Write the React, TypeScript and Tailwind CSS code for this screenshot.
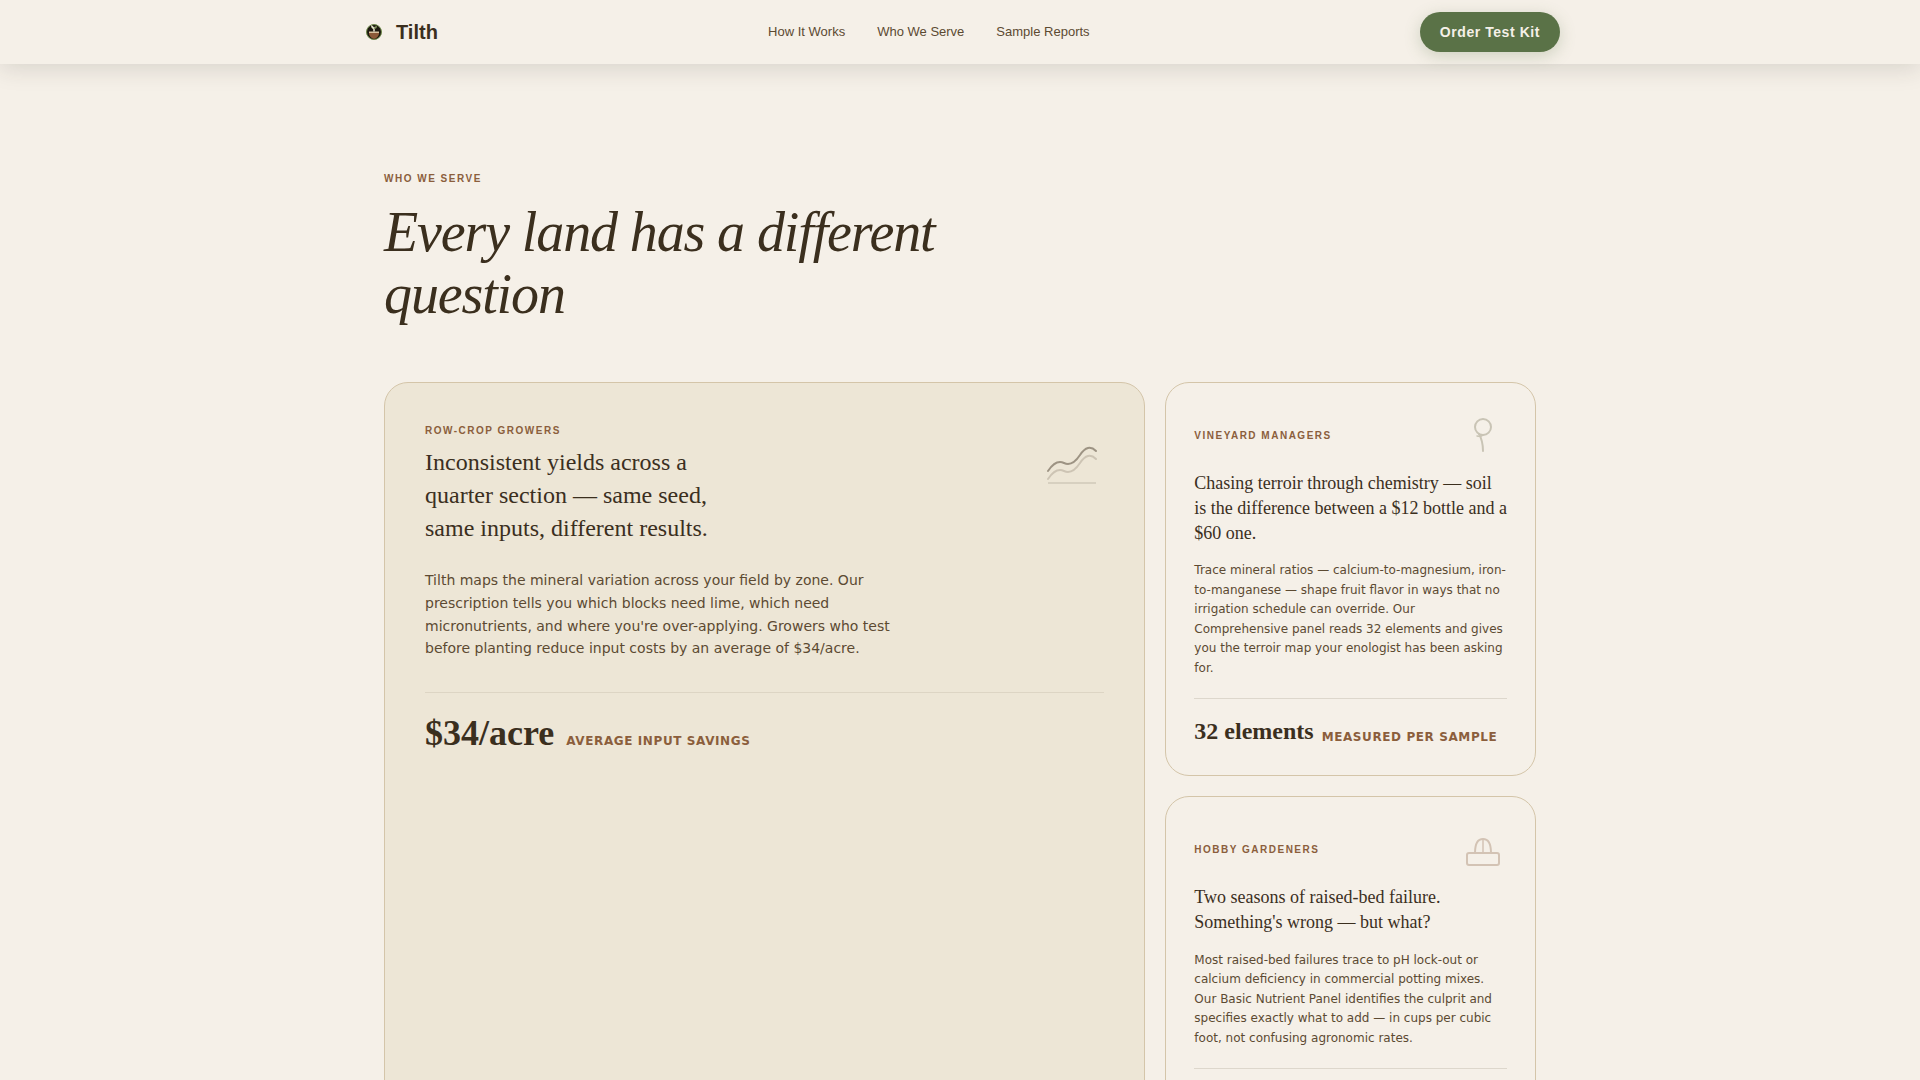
import React from "react";

const label =
  "font-['Liberation_Sans',sans-serif] text-[10px] leading-[15px] font-bold uppercase tracking-[1.5px] text-[#8b5e3c]";

function Logo() {
  return (
    <svg viewBox="0 0 28 28" className="size-7" aria-hidden="true">
      <circle cx="14" cy="14" r="7.5" fill="#1d1a10" stroke="#6f8a4c" strokeWidth="1" />
      <path d="M9 14h10v2q-1 4-5 5q-4-1-5-5z" fill="#8b5a38" />
      <path d="M9 13.500h10v1.500H9z" fill="#d9c3a0" />
      <path d="M14 13.500V9" stroke="#e9e4cf" strokeWidth="1.500" />
      <path d="M14 11q-3 0-3-4q3 1 3 4z" fill="#e4e6cc" />
      <path d="M14 11q3 0 3-3q-3 0-3 3z" fill="#7f8f5c" />
    </svg>
  );
}

function YieldIcon() {
  return (
    <svg viewBox="0 0 64 64" className="size-16 shrink-0" fill="none" stroke="#3b2f1e" strokeLinecap="round" aria-hidden="true">
      <path d="M8 48Q16 36 24 40T40 32T56 28" strokeWidth="2" opacity="0.45" />
      <path d="M8 56Q16 44 24 48T40 40T56 36" strokeWidth="2" opacity="0.18" />
      <path d="M8 60H56" strokeWidth="2" strokeLinecap="butt" opacity="0.12" />
    </svg>
  );
}

function VineIcon() {
  return (
    <svg viewBox="0 0 48 48" className="size-12 shrink-0" fill="none" stroke="#c9c4b5" strokeWidth="2" strokeLinecap="round" aria-hidden="true">
      <circle cx="24" cy="16" r="8" />
      <path d="M24 40Q24 30 20 23" />
      <path d="M18 25Q22 26 24 24" strokeWidth="1.5" />
    </svg>
  );
}

function BedIcon() {
  return (
    <svg viewBox="0 0 48 48" className="size-12 shrink-0" fill="none" stroke="#d3c3b4" strokeWidth="2" strokeLinecap="round" aria-hidden="true">
      <rect x="8" y="28" width="32" height="12" rx="2" />
      <path d="M16 28Q16 14 24 14Q32 14 32 28" />
      <path d="M24 28V14" strokeWidth="1.5" />
    </svg>
  );
}

type SmallCardProps = {
  name: string;
  icon: React.ReactNode;
  title: string;
  body: string;
  stat?: string;
  unit?: string;
};

function SmallCard({ name, icon, title, body, stat, unit }: SmallCardProps) {
  return (
    <article className="rounded-3xl border border-[#d4c5a9] p-7">
      <div className="mb-3 flex items-center justify-between">
        <p className={label}>{name}</p>
        {icon}
      </div>
      <h3 className="mb-4 font-['Liberation_Serif',serif] text-lg leading-snug text-[#3b2f1e]">{title}</h3>
      <p className="text-xs leading-relaxed text-[#5c4a32]">{body}</p>
      <div className="mt-5 flex items-end gap-2 border-t border-[#ddd7cc] pt-4">
        {stat && <span className="font-['Liberation_Serif',serif] text-2xl font-bold text-[#3b2f1e]">{stat}</span>}
        {unit && <span className="text-xs leading-5 font-bold uppercase tracking-[0.6px] text-[#8b5e3c]">{unit}</span>}
      </div>
    </article>
  );
}

export default function App() {
  return (
    <div className="h-screen overflow-hidden bg-[#f5f0e8] font-['DejaVu_Sans',sans-serif] text-[#3b2f1e]">
      <header className="relative z-10 bg-[#f5f0e8] font-['Liberation_Sans',sans-serif] shadow-[0_4px_24px_rgba(50,42,34,0.15)]">
        <div className="mx-auto flex h-16 max-w-[1200px] items-center justify-between">
          <a href="#" className="flex items-center gap-2 text-xl font-bold">
            <Logo />
            Tilth
          </a>
          <nav className="flex gap-8 text-[13px] text-[#5c4a32]">
            <a href="#how">How It Works</a>
            <a href="#serve">Who We Serve</a>
            <a href="#reports">Sample Reports</a>
          </nav>
          <button
            type="button"
            className="h-10 rounded-full bg-[#5a7247] px-5 text-sm font-bold tracking-[0.04em] text-[#f5f0e8] shadow-[0_4px_16px_rgba(90,114,71,0.25)]"
          >
            Order Test Kit
          </button>
        </div>
      </header>

      <main id="serve" className="mx-auto max-w-[1152px] pt-[107px]">
        <p className={label}>Who We Serve</p>
        <h1 className="mt-[15px] mb-[57px] max-w-[640px] font-['Liberation_Serif',serif] text-[56px] leading-[62px] italic tracking-[-0.02em]">
          Every land has a different question
        </h1>

        <div className="grid grid-cols-12 gap-5">
          <article className="col-span-8 rounded-3xl border border-[#d4c5a9] bg-[#ede6d6] p-10">
            <div className="mb-6 flex items-start justify-between">
              <div>
                <p className={label}>Row-Crop Growers</p>
                <h2 className="mt-2 max-w-xs font-['Liberation_Serif',serif] text-2xl leading-snug">
                  Inconsistent yields across a quarter section — same seed, same inputs, different results.
                </h2>
              </div>
              <YieldIcon />
            </div>
            <p className="max-w-[480px] text-sm leading-relaxed text-[#5c4a32]">
              Tilth maps the mineral variation across your field by zone. Our prescription tells you which blocks need
              lime, which need micronutrients, and where you're over-applying. Growers who test before planting reduce
              input costs by an average of $34/acre.
            </p>
            <div className="mt-8 flex items-baseline gap-3 border-t border-[#ddd5c4] pt-5">
              <span className="font-['Liberation_Serif',serif] text-4xl font-bold">$34/acre</span>
              <span className="text-xs font-bold uppercase tracking-[0.6px] text-[#8b5e3c]">Average input savings</span>
            </div>
          </article>

          <div className="col-span-4 flex flex-col gap-5">
            <SmallCard
              name="Vineyard Managers"
              icon={<VineIcon />}
              title="Chasing terroir through chemistry — soil is the difference between a $12 bottle and a $60 one."
              body="Trace mineral ratios — calcium-to-magnesium, iron-to-manganese — shape fruit flavor in ways that no irrigation schedule can override. Our Comprehensive panel reads 32 elements and gives you the terroir map your enologist has been asking for."
              stat="32 elements"
              unit="Measured per sample"
            />
            <SmallCard
              name="Hobby Gardeners"
              icon={<BedIcon />}
              title="Two seasons of raised-bed failure. Something's wrong — but what?"
              body="Most raised-bed failures trace to pH lock-out or calcium deficiency in commercial potting mixes. Our Basic Nutrient Panel identifies the culprit and specifies exactly what to add — in cups per cubic foot, not confusing agronomic rates."
            />
          </div>
        </div>
      </main>
    </div>
  );
}
